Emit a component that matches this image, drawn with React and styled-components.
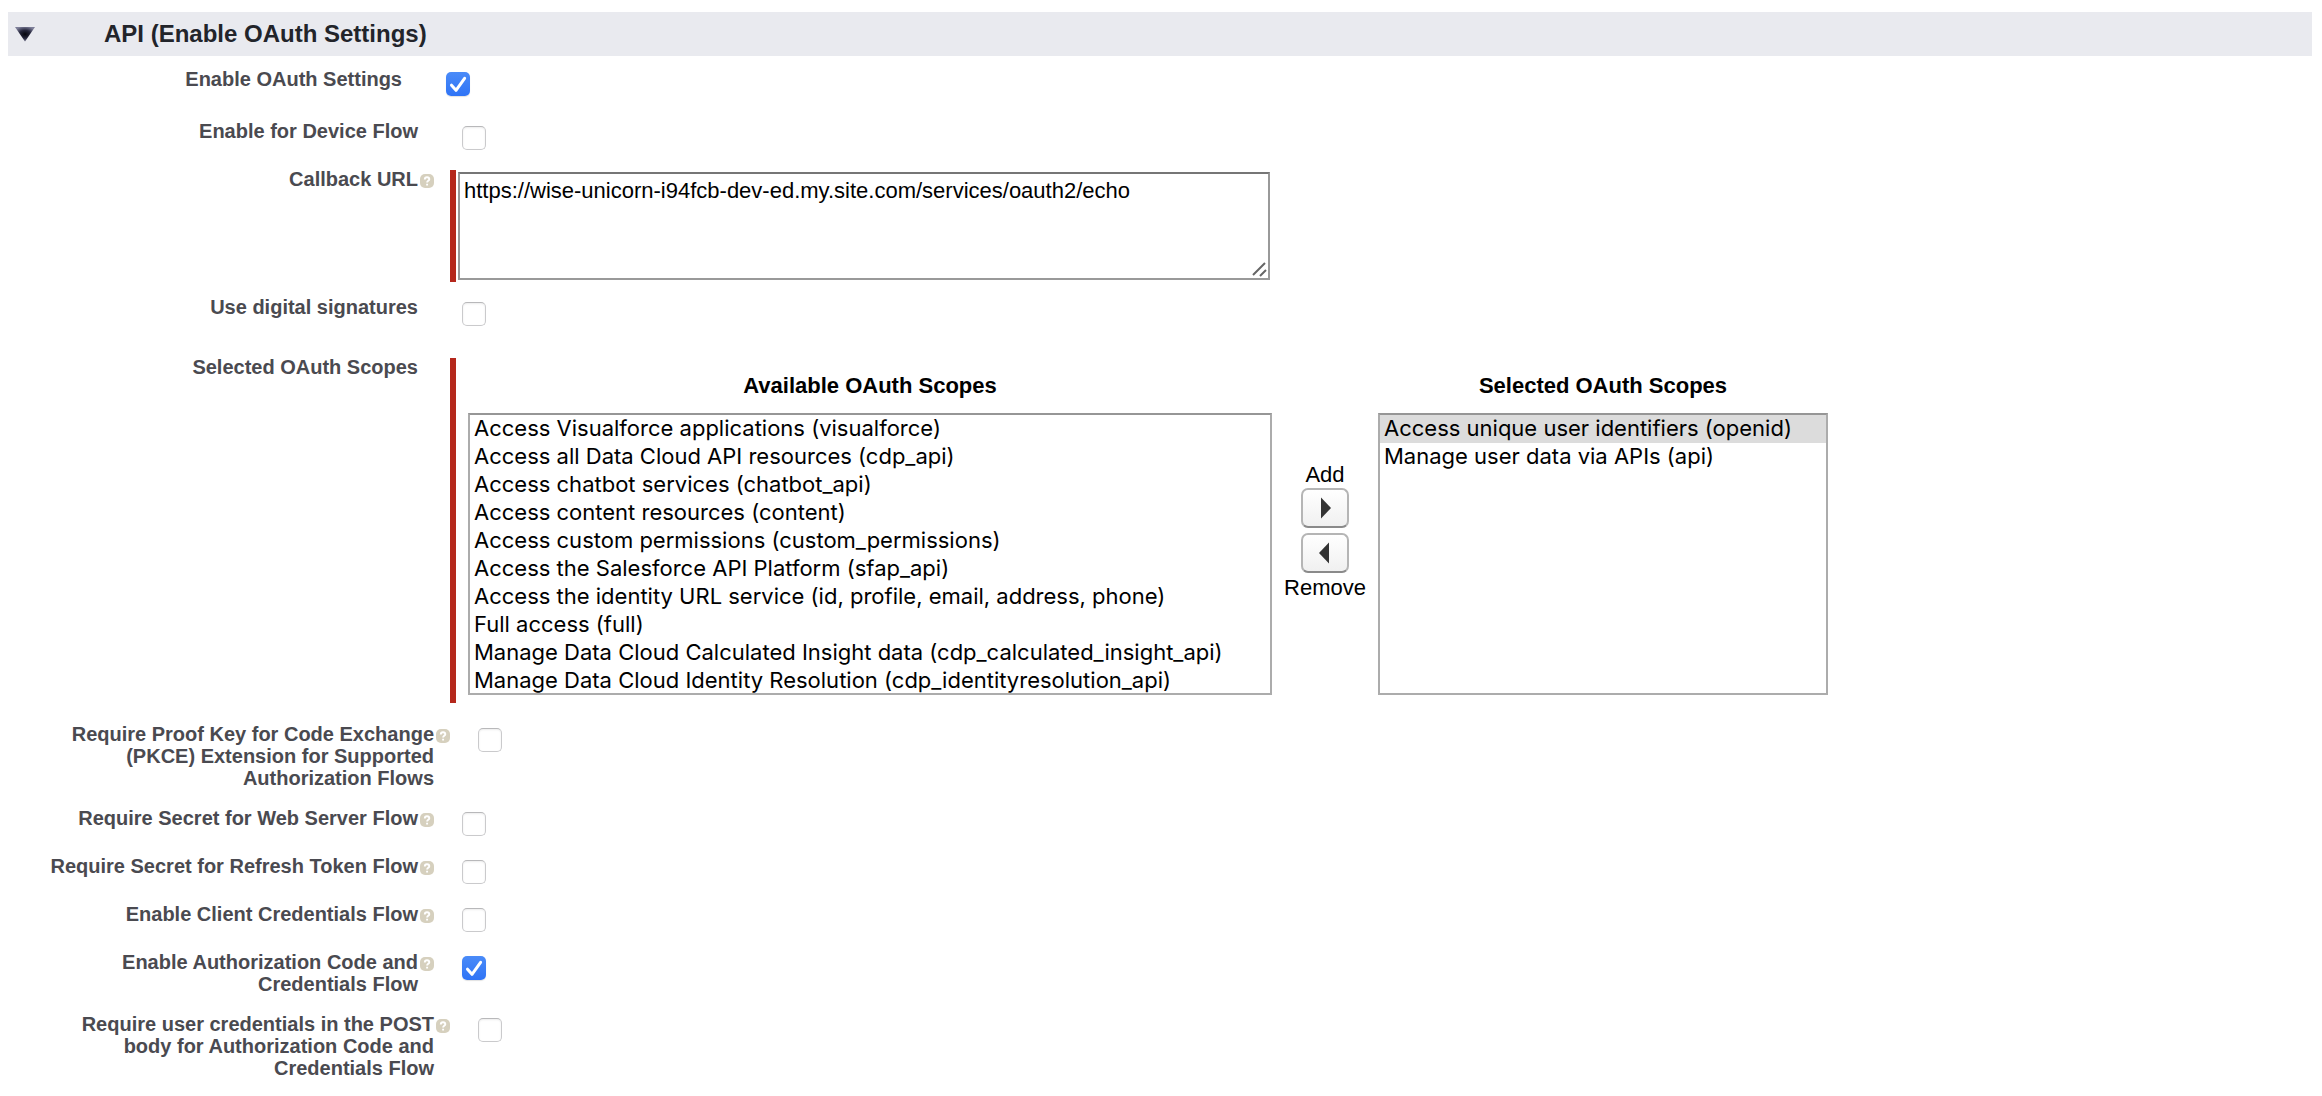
import React, { useState } from "react";
import styled, { createGlobalStyle, css } from "styled-components";

const GlobalStyle = createGlobalStyle`
  *, *::before, *::after { box-sizing: border-box; }
  body {
    margin: 0;
    background: #fff;
    color: #000;
    font-family: "Liberation Sans", Arial, Helvetica, sans-serif;
    font-size: 22px;
    line-height: 26px;
  }
`;

const Page = styled.main`
  padding: 12px 10px 12px 8px;
`;

const SectionHeader = styled.header`
  display: flex;
  align-items: center;
  height: 44px;
  padding-left: 6px;
  background: #e9eaef;
`;

const Disclosure = styled.button`
  display: flex;
  width: 90px;
  padding: 0;
  border: 0;
  background: none;
  cursor: pointer;

  svg {
    display: block;
    width: 22px;
    height: 16px;
  }
`;

const SectionTitle = styled.h3`
  margin: 0;
  color: #22242a;
  font-size: 24px;
  line-height: 28px;
  font-weight: 700;
`;

const Form = styled.form`
  padding-top: 12px;
`;

const Row = styled.div`
  display: grid;
  grid-template-columns: 380px 14px 1fr;
  column-gap: 2px;
  align-items: start;
  padding-left: ${({ $indent = 1 }) => 14 + 16 * $indent}px;
  padding-bottom: ${({ $space = 18 }) => $space}px;
`;

const Label = styled.label`
  color: #4a4a50;
  font-size: 20px;
  line-height: 22px;
  font-weight: 700;
  text-align: right;
`;

const HelpIcon = styled.svg`
  width: 14px;
  height: 14px;
  margin-top: 6px;
`;

const Field = styled.div`
  grid-column: 3;
  display: flex;
  min-height: 30px;
  padding-top: ${({ $top = 6 }) => $top}px;
  padding-left: ${({ $required }) => ($required ? 14 : 26)}px;
`;

const RequiredBlock = styled.div`
  display: flex;
  border-left: 6px solid #b5281c;
  padding: ${({ $duel }) => ($duel ? "15px 0 8px 12px" : "2px 0 2px 2px")};
`;

const CheckWrap = styled.span`
  display: grid;
  width: 24px;
  height: 24px;

  > * {
    grid-area: 1 / 1;
  }

  svg {
    width: 24px;
    height: 24px;
    pointer-events: none;
  }
`;

const CheckInput = styled.input`
  appearance: none;
  width: 24px;
  height: 24px;
  margin: 0;
  border: 1px solid #cacacc;
  border-top-color: #b8b8ba;
  border-radius: 5px;
  background: #fff;
  box-shadow: inset 0 1px 2px rgba(0, 0, 0, 0.08);

  &:checked {
    border: 0;
    background: linear-gradient(#4a8bf8, #2f74f6);
    box-shadow: 0 1px 1px rgba(0, 0, 0, 0.12);
  }
`;

const AreaWrap = styled.div`
  position: relative;
  display: flex;
`;

const Area = styled.textarea`
  width: 812px;
  height: 108px;
  margin: 0;
  padding: 4px;
  border: 2px solid #999;
  border-top-color: #767676;
  border-radius: 0;
  background: #fff;
  color: #000;
  font: 22px/26px "Liberation Sans", Arial, sans-serif;
  resize: none;
  outline: none;
`;

const Grip = styled.svg`
  position: absolute;
  right: 2px;
  bottom: 2px;
  width: 16px;
  height: 16px;
  pointer-events: none;
`;

const Duel = styled.div`
  display: grid;
  grid-template-columns: 804px 106px 450px;
`;

const DuelColumn = styled.div`
  display: flex;
  flex-direction: column;
  gap: 14px;
`;

const DuelHeading = styled.label`
  font-weight: 700;
  text-align: center;
`;

const ListBox = styled.select`
  appearance: none;
  width: 100%;
  height: 282px;
  margin: 0;
  padding: 0;
  border: 2px solid #acacac;
  border-top-color: #969696;
  border-radius: 0;
  background: #fff;
  color: #000;
  font: 22px/26px Inter, "Open Sans", sans-serif;
  overflow: hidden;
  scrollbar-width: none;
  outline: none;

  option {
    height: 28px;
    min-height: 28px;
    padding: 0 4px 2px;
    line-height: 26px;
    color: #000;
  }

  option:checked {
    background: linear-gradient(#dcdcdc, #dcdcdc);
    color: #000;
  }
`;

const Mover = styled.div`
  display: flex;
  flex-direction: column;
  align-items: center;
  padding-top: 89px;
`;

const MoveButton = styled.button`
  display: grid;
  place-items: center;
  width: 48px;
  height: 40px;
  margin-bottom: ${({ $last }) => ($last ? 2 : 5)}px;
  padding: 0;
  border: 2px solid #b5b5b5;
  border-bottom-color: #8a8a8a;
  border-radius: 7px;
  background: linear-gradient(#fff, #f0f0f0);
  cursor: pointer;

  svg {
    width: 12px;
    height: 22px;
    ${({ $flip }) => $flip && css`transform: scaleX(-1);`}
  }
`;

function Help() {
  return (
    <HelpIcon viewBox="0 0 14 14" role="img" aria-label="Help">
      <rect width="14" height="14" rx="5" fill="#d6d0be" />
      <path
        d="M4.800 5.400C4.800 3.900 5.700 3.200 7 3.200s2.300.8 2.300 2c0 1.500-2.200 1.700-2.200 3.200M7.100 9.700v1.800"
        fill="none"
        stroke="#fff"
        strokeWidth="1.900"
      />
    </HelpIcon>
  );
}

function CheckRow({ id, text, help, checked, indent, space, top }) {
  const [on, setOn] = useState(Boolean(checked));
  return (
    <Row $indent={indent} $space={space}>
      <Label htmlFor={id}>{text}</Label>
      {help && <Help />}
      <Field $top={help ? 5 : top}>
        <CheckWrap>
          <CheckInput
            id={id}
            type="checkbox"
            checked={on}
            onChange={(e) => setOn(e.target.checked)}
          />
          {on && (
            <svg viewBox="0 0 24 24" aria-hidden="true">
              <path
                d="M5.500 13.200L10 18.300L18.600 6.300"
                fill="none"
                stroke="#fff"
                strokeWidth="3"
                strokeLinecap="round"
                strokeLinejoin="round"
              />
            </svg>
          )}
        </CheckWrap>
      </Field>
    </Row>
  );
}

function Arrow() {
  return (
    <svg viewBox="0 0 12 22" aria-hidden="true">
      <path d="M2 0.500L12 11L2 21.500Z" fill="#333" />
    </svg>
  );
}

const availableScopes = [
  "Access Visualforce applications (visualforce)",
  "Access all Data Cloud API resources (cdp_api)",
  "Access chatbot services (chatbot_api)",
  "Access content resources (content)",
  "Access custom permissions (custom_permissions)",
  "Access the Salesforce API Platform (sfap_api)",
  "Access the identity URL service (id, profile, email, address, phone)",
  "Full access (full)",
  "Manage Data Cloud Calculated Insight data (cdp_calculated_insight_api)",
  "Manage Data Cloud Identity Resolution (cdp_identityresolution_api)",
];

const selectedScopes = [
  "Access unique user identifiers (openid)",
  "Manage user data via APIs (api)",
];

function ScopeList({ id, title, scopes, initial }) {
  return (
    <DuelColumn>
      <DuelHeading htmlFor={id}>{title}</DuelHeading>
      <ListBox id={id} multiple size={10} defaultValue={initial}>
        {scopes.map((scope) => (
          <option key={scope} value={scope}>
            {scope}
          </option>
        ))}
      </ListBox>
    </DuelColumn>
  );
}

export default function App() {
  return (
    <Page>
      <GlobalStyle />
      <SectionHeader>
        <Disclosure type="button" aria-expanded="true" aria-label="Toggle section">
          <svg viewBox="0 0 22 16" aria-hidden="true">
            <defs>
              <radialGradient id="tri" cx="0.5" cy="0.5" r="0.55">
                <stop offset="0" stopColor="#05050c" />
                <stop offset="0.5" stopColor="#25263c" />
                <stop offset="1" stopColor="#7d7e98" />
              </radialGradient>
            </defs>
            <path d="M1 1H21L11 15.500Z" fill="url(#tri)" />
          </svg>
        </Disclosure>
        <SectionTitle>API (Enable OAuth Settings)</SectionTitle>
      </SectionHeader>

      <Form>
        <CheckRow id="oauth" text="Enable OAuth Settings" checked indent={0} top={4} space={22} />
        <CheckRow id="device" text="Enable for Device Flow" />

        <Row $space={14}>
          <Label htmlFor="callback">Callback URL</Label>
          <Help />
          <Field $required $top={2}>
            <RequiredBlock>
              <AreaWrap>
                <Area
                  id="callback"
                  spellCheck={false}
                  defaultValue="https://wise-unicorn-i94fcb-dev-ed.my.site.com/services/oauth2/echo"
                />
                <Grip viewBox="0 0 16 16" aria-hidden="true">
                  <path d="M1 13L13 1M8 14L14 8" fill="none" stroke="#666" strokeWidth="2" />
                </Grip>
              </AreaWrap>
            </RequiredBlock>
          </Field>
        </Row>

        <CheckRow id="signatures" text="Use digital signatures" space={30} />

        <Row $space={20}>
          <Label as="span">Selected OAuth Scopes</Label>
          <Field $required $top={2}>
            <RequiredBlock $duel>
              <Duel>
                <ScopeList
                  id="available"
                  title="Available OAuth Scopes"
                  scopes={availableScopes}
                  initial={[]}
                />
                <Mover>
                  <span>Add</span>
                  <MoveButton type="button" aria-label="Add">
                    <Arrow />
                  </MoveButton>
                  <MoveButton type="button" aria-label="Remove" $flip $last>
                    <Arrow />
                  </MoveButton>
                  <span>Remove</span>
                </Mover>
                <ScopeList
                  id="selected"
                  title="Selected OAuth Scopes"
                  scopes={selectedScopes}
                  initial={selectedScopes.slice(0, 1)}
                />
              </Duel>
            </RequiredBlock>
          </Field>
        </Row>

        <CheckRow
          id="pkce"
          text="Require Proof Key for Code Exchange (PKCE) Extension for Supported Authorization Flows"
          help
          indent={2}
        />
        <CheckRow id="webserver" text="Require Secret for Web Server Flow" help />
        <CheckRow id="refresh" text="Require Secret for Refresh Token Flow" help />
        <CheckRow id="client" text="Enable Client Credentials Flow" help />
        <CheckRow
          id="authcode"
          text="Enable Authorization Code and Credentials Flow"
          help
          checked
        />
        <CheckRow
          id="post"
          text="Require user credentials in the POST body for Authorization Code and Credentials Flow"
          help
          indent={2}
          space={0}
        />
      </Form>
    </Page>
  );
}
